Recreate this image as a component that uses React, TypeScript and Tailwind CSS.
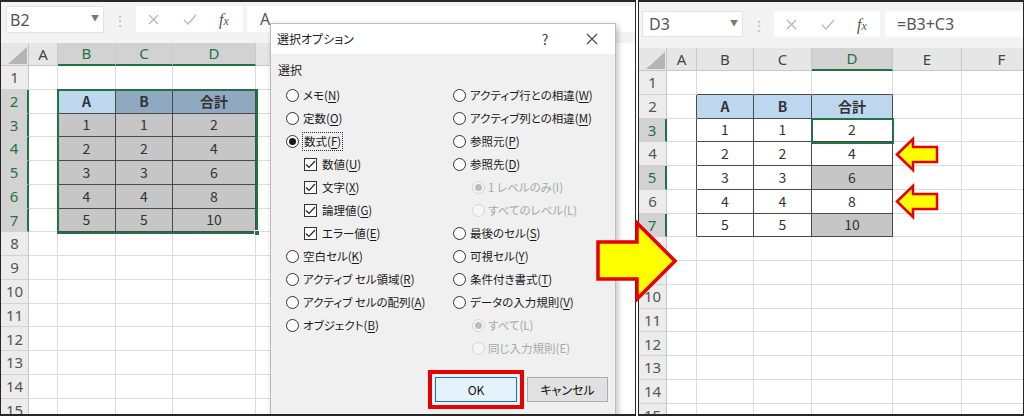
import React from "react";

const JP = "font-['Noto_Sans_CJK_JP',sans-serif]";
const UI = "font-['Noto_Sans','Noto_Sans_CJK_JP',sans-serif]";

const GRID_R = "border-r-[#dcdcdc]";
const GRID_B = "border-b-[#dcdcdc]";
const DARK_R = "border-r-[#4a4a4a]";
const DARK_B = "border-b-[#4a4a4a]";

type CellInfo = { text: string; bold: boolean; bg: string; br: string; bb: string };

function tableText(r: number, c: number) {
  if (r === 2) return ["A", "B", "合計"][c - 1];
  const n = r - 2;
  return String(c === 3 ? n * 2 : n);
}

// the little table sits in B2:D7 on both sheets
function baseCell(r: number, c: number, bg: string): CellInfo {
  const inT = r >= 2 && r <= 7 && c >= 1 && c <= 3;
  return {
    text: inT ? tableText(r, c) : "",
    bold: inT && r === 2,
    bg,
    br: inT || (c === 0 && r >= 2 && r <= 7) ? DARK_R : GRID_R,
    bb: inT || (r === 1 && c >= 1 && c <= 3) ? DARK_B : GRID_B,
  };
}

function leftCell(r: number, c: number) {
  let bg = "bg-white";
  if (r === 2 && c === 1) bg = "bg-[#bdd7ee]";
  else if (r === 2 && c >= 2 && c <= 3) bg = "bg-[#8fa9c1]";
  else if (r >= 3 && r <= 7 && c >= 1 && c <= 3) bg = "bg-[#c6c6c6]";
  return baseCell(r, c, bg);
}

function rightCell(r: number, c: number) {
  let bg = "bg-white";
  if (r === 2 && c >= 1 && c <= 3) bg = "bg-[#bdd7ee]";
  else if ((r === 5 || r === 7) && c === 3) bg = "bg-[#c6c6c6]";
  return baseCell(r, c, bg);
}

type SheetProps = {
  letters: string[];
  widths: string[];
  selCols: number[];
  selRows: number[];
  cell: (r: number, c: number) => CellInfo;
  overlay?: React.ReactNode;
};

function Sheet({ letters, widths, selCols, selRows, cell, overlay }: SheetProps) {
  const rows = Array.from({ length: 15 }, (_, i) => i + 1);
  return (
    <div className="relative">
      <div className={`flex h-[23px] ${UI}`}>
        <div className="w-[28px] shrink-0 bg-[#e6e6e6] border-r border-b border-[#c8c8c8] flex items-end justify-end pr-[1px] pb-[1px]">
          <svg width="19" height="17">
            <polygon points="19,0 19,17 0,17" fill="#b5b5b5" />
          </svg>
        </div>
        {letters.map((l, i) => {
          const sel = selCols.includes(i);
          return (
            <div
              key={l}
              className={`${widths[i]} shrink-0 flex items-center justify-center text-[15px] border-r border-r-[#c8c8c8] ${
                sel
                  ? "bg-[#d2d2d2] text-[#217346] border-b-2 border-b-[#217346]"
                  : "bg-[#e6e6e6] text-[#444] border-b border-b-[#c8c8c8]"
              }`}
            >
              {l}
            </div>
          );
        })}
      </div>
      {rows.map((r) => {
        const sel = selRows.includes(r);
        return (
          <div key={r} className="flex h-[23.78px]">
            <div
              className={`w-[28px] shrink-0 flex items-center justify-center text-[15px] border-b border-b-[#d2d2d2] ${UI} ${
                sel
                  ? "bg-[#d2d2d2] text-[#217346] border-r-2 border-r-[#217346]"
                  : "bg-[#ececec] text-[#555] border-r border-r-[#c6c6c6]"
              }`}
            >
              {r}
            </div>
            {letters.map((l, c) => {
              const info = cell(r, c);
              return (
                <div
                  key={l}
                  className={`${widths[c]} shrink-0 flex items-center justify-center text-[14px] text-[#333] border-r border-b ${info.br} ${info.bb} ${info.bg} ${
                    info.bold ? "font-bold text-[#222]" : ""
                  }`}
                >
                  {info.text}
                </div>
              );
            })}
          </div>
        );
      })}
      {overlay}
    </div>
  );
}

function FormulaBar({ name, formula, right }: { name: string; formula: string; right?: boolean }) {
  return (
    <div
      className={`flex items-start bg-[#f3f3f3] ${UI} ${
        right ? "h-[46px] pt-[9px] pl-[3px]" : "h-[41px] pt-[4px] pl-[5px]"
      }`}
    >
      <div
        className={`relative bg-white border border-[#e2e2e2] flex items-center text-[16px] text-[#555] ${
          right ? "w-[101px] h-[26px] pl-[6px]" : "w-[98px] h-[27px] pl-[3px]"
        }`}
      >
        {name}
        <span className="absolute right-[4px] top-[5px] text-[8px] text-[#777]">▼</span>
      </div>
      <div className={`flex justify-center pt-[4px] text-[14px] text-[#bdbdbd] ${right ? "w-[31px]" : "w-[32px]"}`}>⋮</div>
      <div className={`relative bg-white h-[26px] ${right ? "w-[106px]" : "w-[107px]"}`}>
        <svg className="absolute left-[12px] top-[8px]" width="11" height="11">
          <path d="M1 1L10 10M10 1L1 10" stroke="#b8b8b8" strokeWidth="1.3" />
        </svg>
        <svg className="absolute left-[47px] top-[8px]" width="14" height="11">
          <path d="M1 6L5 10L13 1" stroke="#b8b8b8" strokeWidth="1.3" fill="none" />
        </svg>
        <span className="absolute left-[83px] top-[2px] font-['Liberation_Serif',serif] italic text-[16px] text-[#555]">
          f<span className="text-[12px]">x</span>
        </span>
      </div>
      <div
        className={`flex-1 bg-white h-[26px] flex items-center text-[16px] text-[#555] ${
          right ? "ml-[5px] pl-[12px]" : "ml-[4px] pl-[13px]"
        }`}
      >
        {formula}
      </div>
    </div>
  );
}

type Opt = { kind: "radio" | "check" | "sub"; label: string; key: string; on?: boolean; focus?: boolean };

const leftOpts: Opt[] = [
  { kind: "radio", label: "メモ", key: "N" },
  { kind: "radio", label: "定数", key: "O" },
  { kind: "radio", label: "数式", key: "F", on: true, focus: true },
  { kind: "check", label: "数値", key: "U" },
  { kind: "check", label: "文字", key: "X" },
  { kind: "check", label: "論理値", key: "G" },
  { kind: "check", label: "エラー値", key: "E" },
  { kind: "radio", label: "空白セル", key: "K" },
  { kind: "radio", label: "アクティブ セル領域", key: "R" },
  { kind: "radio", label: "アクティブ セルの配列", key: "A" },
  { kind: "radio", label: "オブジェクト", key: "B" },
];

const rightOpts: Opt[] = [
  { kind: "radio", label: "アクティブ行との相違", key: "W" },
  { kind: "radio", label: "アクティブ列との相違", key: "M" },
  { kind: "radio", label: "参照元", key: "P" },
  { kind: "radio", label: "参照先", key: "D" },
  { kind: "sub", label: "1 レベルのみ", key: "I", on: true },
  { kind: "sub", label: "すべてのレベル", key: "L" },
  { kind: "radio", label: "最後のセル", key: "S" },
  { kind: "radio", label: "可視セル", key: "Y" },
  { kind: "radio", label: "条件付き書式", key: "T" },
  { kind: "radio", label: "データの入力規則", key: "V" },
  { kind: "sub", label: "すべて", key: "L", on: true },
  { kind: "sub", label: "同じ入力規則", key: "E" },
];

function Radio({ on, disabled }: { on?: boolean; disabled?: boolean }) {
  return (
    <span
      className={`w-[13px] h-[13px] rounded-full border flex items-center justify-center shrink-0 ${
        disabled ? "border-[#d4d4d4] bg-[#f6f6f6]" : "border-[#333] bg-white"
      }`}
    >
      {on && <span className={`w-[7px] h-[7px] rounded-full ${disabled ? "bg-[#bcbcbc]" : "bg-[#1a1a1a]"}`} />}
    </span>
  );
}

function Check() {
  return (
    <span className="w-[13px] h-[13px] border border-[#333] bg-white shrink-0 flex items-center justify-center">
      <svg width="11" height="9">
        <path d="M1 4.5L4 7.5L10 1" stroke="#222" strokeWidth="1.2" fill="none" />
      </svg>
    </span>
  );
}

function Option({ o }: { o: Opt }) {
  const disabled = o.kind === "sub";
  return (
    <div
      className={`flex items-center h-[23px] ${o.kind === "check" ? "pl-[18px] gap-[5px]" : ""} ${
        o.kind === "sub" ? "pl-[19px] gap-[3px]" : ""
      } ${o.kind === "radio" ? "gap-[4px]" : ""}`}
    >
      {o.kind === "check" ? <Check /> : <Radio on={o.on} disabled={disabled} />}
      <span
        className={`whitespace-nowrap ${disabled ? "text-[#a8a8a8]" : "text-[#1a1a1a]"} ${
          o.focus ? "outline-1 outline-dotted outline-[#333] px-[1px]" : ""
        }`}
      >
        {o.label}(
        {disabled ? o.key : <span className="underline underline-offset-2">{o.key}</span>})
      </span>
    </div>
  );
}

function Dialog() {
  return (
    <div
      className={`absolute left-[269px] top-[21px] w-[346px] h-[400px] bg-[#f0f0f0] border border-[#bdbdbd] shadow-[2px_2px_6px_rgba(0,0,0,0.25)] text-[11.5px] [font-feature-settings:'palt'] ${JP}`}
    >
      <div className="h-[30px] bg-white flex items-center pl-[6px] text-[12px] text-[#222]">
        選択オプション
        <span className="ml-auto w-[30px] text-center text-[14px] text-[#444]">?</span>
        <span className="ml-[17px] mr-[8px] w-[30px] flex justify-center">
          <svg width="12" height="12">
            <path d="M1 1L11 11M11 1L1 11" stroke="#444" strokeWidth="1.1" />
          </svg>
        </span>
      </div>
      <div className="pl-[7px] pt-[7px] pr-[7px]">
        <div className="h-[18px] flex items-center text-[12px] text-[#222]">選択</div>
        <div className="mt-[5px] ml-[8px] flex">
          <div className="w-[167px]">
            {leftOpts.map((o) => (
              <Option key={o.label} o={o} />
            ))}
          </div>
          <div>
            {rightOpts.map((o) => (
              <Option key={o.label} o={o} />
            ))}
          </div>
        </div>
        <div className="mt-[17px] flex justify-end gap-[10px] text-[12px]">
          <button className="w-[82px] h-[25px] bg-[#e5f1fb] border border-[#0078d7] text-[#111] outline-4 outline-[#e60000] outline-offset-[3px]">
            OK
          </button>
          <button className="w-[81px] h-[25px] bg-[#e1e1e1] border border-[#adadad] text-[#111]">キャンセル</button>
        </div>
      </div>
    </div>
  );
}

function SmallArrow({ top }: { top: string }) {
  return (
    <svg className={`absolute left-[894px] ${top}`} width="46" height="37">
      <polygon
        points="3,18.5 19,3 19,11 43,11 43,26 19,26 19,34"
        fill="#ffff00"
        stroke="#e60000"
        strokeWidth="2.5"
        strokeLinejoin="miter"
      />
    </svg>
  );
}

export default function App() {
  return (
    <div className={`relative w-[1024px] h-[416px] bg-white overflow-hidden flex gap-[2px] ${JP}`}>
      <div className="relative w-[636px] h-full shrink-0 overflow-hidden border-l border-r border-t-2 border-b-2 border-[#262626]">
        <FormulaBar name="B2" formula="A" />
        <Sheet
          letters={["A", "B", "C", "D", "E", "F", "G", "H"]}
          widths={["w-[29px]", "w-[58px]", "w-[57px]", "w-[83px]", "w-[80px]", "w-[80px]", "w-[80px]", "w-[80px]"]}
          selCols={[1, 2, 3]}
          selRows={[2, 3, 4, 5, 6, 7]}
          cell={leftCell}
          overlay={
            <>
              <div className="absolute left-[56px] top-[45.8px] w-[201px] h-[145px] border-2 border-[#217346]" />
              <div className="absolute left-[253px] top-[187px] w-[6px] h-[6px] bg-[#217346] border border-white" />
            </>
          }
        />
        <Dialog />
      </div>
      <div className="relative flex-1 h-full overflow-hidden border-l border-r border-t-2 border-b-2 border-[#262626]">
        <FormulaBar name="D3" formula="=B3+C3" right />
        <Sheet
          letters={["A", "B", "C", "D", "E", "F"]}
          widths={["w-[30px]", "w-[57px]", "w-[58px]", "w-[81px]", "w-[69px]", "w-[80px]"]}
          selCols={[3]}
          selRows={[3, 5, 7]}
          cell={rightCell}
          overlay={<div className="absolute left-[172px] top-[69.5px] w-[83px] h-[26px] border-2 border-[#217346]" />}
        />
      </div>
      <svg className="absolute left-[594px] top-[219px]" width="86" height="84">
        <polygon
          points="4,23 43,23 43,4 81,42 43,80 43,60 4,60"
          fill="#ffff00"
          stroke="#e60000"
          strokeWidth="3.5"
          strokeLinejoin="miter"
        />
      </svg>
      <SmallArrow top="top-[136px]" />
      <SmallArrow top="top-[183px]" />
    </div>
  );
}
